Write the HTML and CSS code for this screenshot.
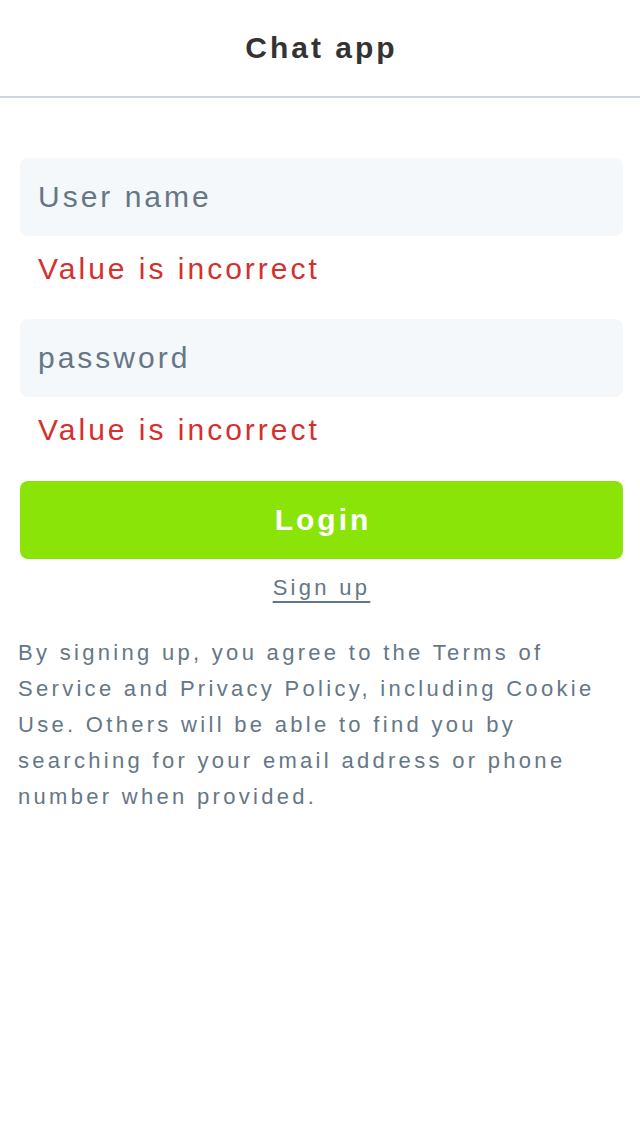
FILE: index.html
```html
<!DOCTYPE html>
<html lang="en">
<head>
<meta charset="utf-8">
<title>Chat app</title>
<link rel="stylesheet" href="styles.css">
</head>
<body>
<header class="topbar">
  <h1 class="topbar-title">Chat app</h1>
</header>
<main class="login">
  <form class="login-form">
    <div class="field">
      <input class="field-input" type="text" placeholder="User name">
      <p class="field-error">Value is incorrect</p>
    </div>
    <div class="field">
      <input class="field-input" type="password" placeholder="password">
      <p class="field-error">Value is incorrect</p>
    </div>
    <button class="login-btn" type="button">Login</button>
    <a class="signup-link" href="#">Sign up</a>
  </form>
  <p class="terms">By signing up, you agree to the Terms of Service and Privacy Policy, including Cookie Use. Others will be able to find you by searching for your email address or phone number when provided.</p>
</main>
</body>
</html>
```

FILE: styles.css
```css
* {
  box-sizing: border-box;
}

html, body {
  margin: 0;
  padding: 0;
  background: #ffffff;
}

body {
  font-family: "Liberation Sans", Arial, sans-serif;
  color: #657786;
}

.topbar {
  height: 98px;
  border-bottom: 2px solid #ccd6dd;
  display: flex;
  align-items: center;
  justify-content: center;
}

.topbar-title {
  margin: 0;
  font-size: 30px;
  font-weight: bold;
  letter-spacing: 3px;
  color: #333333;
  line-height: 36px;
  padding-left: 3px;
}

.login {
  padding: 60px 17px 0 18px;
}

.login-form {
  display: flex;
  flex-direction: column;
  padding-left: 2px;
}

.field {
  display: flex;
  flex-direction: column;
  margin-bottom: 33px;
}

.field + .field {
  margin-top: -1px;
}

.field-input {
  height: 78px;
  width: 100%;
  border: none;
  outline: none;
  border-radius: 8px;
  background: #f5f8fa;
  padding: 0 18px;
  font-family: "Liberation Sans", Arial, sans-serif;
  font-size: 30px;
  letter-spacing: 3px;
  color: #14171a;
}

.field-input::placeholder {
  color: #657786;
  opacity: 1;
}

.field-error {
  margin: 15px 0 0 0;
  padding-left: 18px;
  font-size: 30px;
  line-height: 36px;
  letter-spacing: 3px;
  color: #d3302f;
}

.login-btn {
  height: 78px;
  width: 100%;
  border: none;
  border-radius: 8px;
  background: #8ae407;
  color: #ffffff;
  font-family: "Liberation Sans", Arial, sans-serif;
  font-size: 30px;
  font-weight: bold;
  letter-spacing: 3px;
  padding: 0 0 0 3px;
}

.signup-link {
  align-self: center;
  margin-top: 11px;
  font-size: 22px;
  line-height: 36px;
  letter-spacing: 3.3px;
  color: #657786;
  text-decoration: underline;
  text-decoration-thickness: 2px;
  text-decoration-skip-ink: none;
  text-underline-offset: 6px;
}

.terms {
  margin: 29px 0 0 0;
  font-size: 22px;
  line-height: 36px;
  letter-spacing: 3.3px;
  color: #657786;
}
```
